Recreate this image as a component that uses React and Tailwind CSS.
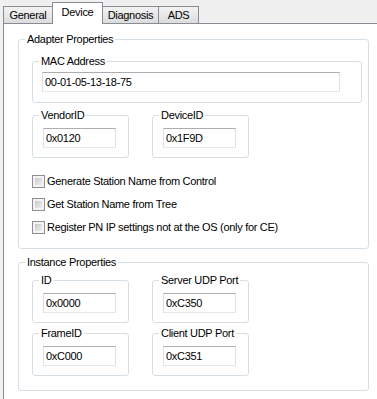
import React from 'react';

const GroupBox = ({ title, className = '', bodyClass = '', children }) => (
  <fieldset className={`border border-[#d5dfe5] rounded-[3px] ${className}`}>
    <legend className="ml-[6px] px-[2px] leading-[13px] whitespace-nowrap">{title}</legend>
    <div className={bodyClass}>{children}</div>
  </fieldset>
);

const TextBox = ({ value, className = '' }) => (
  <input
    readOnly
    value={value}
    className={`h-[20px] border border-[#abadb3] border-x-[#dbdfe6] border-b-[#e3e9ef] bg-white px-[2px] outline-none ${className}`}
  />
);

const Field = ({ label, value }) => (
  <GroupBox title={label} className="w-[97px]" bodyClass="pl-[10px] pt-[6px] pb-[9px]">
    <TextBox value={value} className="w-[73px]" />
  </GroupBox>
);

const CheckRow = ({ label }) => (
  <label className="flex items-center gap-[2px] h-[13px]">
    <span className="w-[13px] h-[13px] border border-[#8e8f8f] bg-[#f4f4f4] p-[2px]">
      <span className="block w-full h-full bg-gradient-to-br from-[#c9c9c9] to-[#efefef]" />
    </span>
    <span className="leading-[13px]">{label}</span>
  </label>
);

const tabs = ['General', 'Device', 'Diagnosis', 'ADS'];
const tabWidths = {
  General: 'w-[50px]',
  Device: 'w-[51px]',
  Diagnosis: 'w-[57px]',
  ADS: 'w-[41px]',
};

export default function App() {
  const active = 'Device';

  return (
    <div className="w-[377px] h-[399px] overflow-hidden bg-[#f0f0f0] flex flex-col text-[11px] tracking-[-0.3px] text-black font-['Liberation_Sans',Arial,sans-serif]">
      <div className="flex items-end h-[23px] pl-[3px] relative z-10">
        {tabs.map((t, i) => (
          <div
            key={t}
            className={`${tabWidths[t]} ${i > 0 ? '-ml-px' : ''} flex justify-center border border-b-0 border-[#898c95] ${
              t === active
                ? 'h-[22px] -mb-px bg-white pt-[3px]'
                : 'h-[17px] bg-gradient-to-b from-[#f3f3f3] to-[#dcdcdc] pt-[2px]'
            }`}
          >
            <span className="leading-[13px]">{t}</span>
          </div>
        ))}
      </div>

      <div className="ml-[3px] flex-1 border-l border-t border-[#898c95] bg-white pl-[14px] pt-[9px]">
        <GroupBox title="Adapter Properties" className="w-[351px]" bodyClass="pl-[13px] pb-[14px]">
          <GroupBox title="MAC Address" className="mt-[9px] w-[330px]" bodyClass="pl-[9px] pt-[4px] pb-[10px]">
            <TextBox value="00-01-05-13-18-75" className="w-[298px]" />
          </GroupBox>

          <div className="mt-[6px] flex gap-[23px]">
            <Field label="VendorID" value="0x0120" />
            <Field label="DeviceID" value="0x1F9D" />
          </div>

          <div className="mt-[17px] flex flex-col gap-[10px]">
            <CheckRow label="Generate Station Name from Control" />
            <CheckRow label="Get Station Name from Tree" />
            <CheckRow label="Register PN IP settings not at the OS (only for CE)" />
          </div>
        </GroupBox>

        <GroupBox title="Instance Properties" className="mt-[7px] w-[351px]" bodyClass="pl-[13px] pb-[14px]">
          <div className="mt-[5px] grid grid-cols-[97px_97px] gap-x-[23px] gap-y-[4px]">
            <Field label="ID" value="0x0000" />
            <Field label="Server UDP Port" value="0xC350" />
            <Field label="FrameID" value="0xC000" />
            <Field label="Client UDP Port" value="0xC351" />
          </div>
        </GroupBox>
      </div>
    </div>
  );
}
